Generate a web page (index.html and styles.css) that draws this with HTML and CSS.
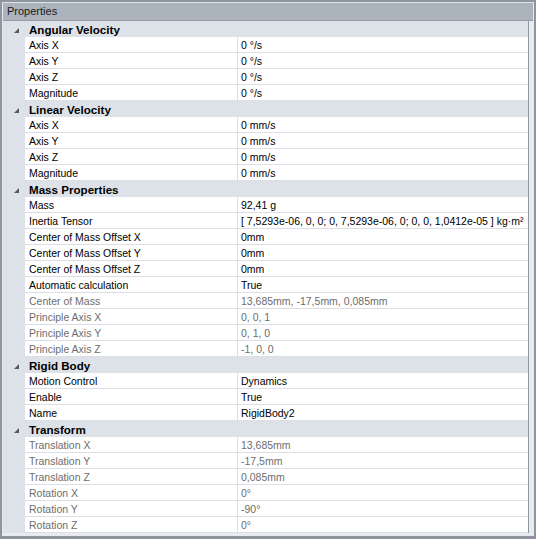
FILE: index.html
```html
<!DOCTYPE html>
<html>
<head>
<meta charset="utf-8">
<link rel="stylesheet" href="styles.css">
</head>
<body>
<div class="frame">
  <div class="panel">
    <div class="title">Properties</div>
    <div class="grid">
      <div class="cat"><span class="arrow"></span><span class="cat-name">Angular Velocity</span></div>
      <div class="row"><div class="gut"></div><div class="label">Axis X</div><div class="value">0 °/s</div></div>
      <div class="row"><div class="gut"></div><div class="label">Axis Y</div><div class="value">0 °/s</div></div>
      <div class="row"><div class="gut"></div><div class="label">Axis Z</div><div class="value">0 °/s</div></div>
      <div class="row"><div class="gut"></div><div class="label">Magnitude</div><div class="value">0 °/s</div></div>

      <div class="cat"><span class="arrow"></span><span class="cat-name">Linear Velocity</span></div>
      <div class="row"><div class="gut"></div><div class="label">Axis X</div><div class="value">0 mm/s</div></div>
      <div class="row"><div class="gut"></div><div class="label">Axis Y</div><div class="value">0 mm/s</div></div>
      <div class="row"><div class="gut"></div><div class="label">Axis Z</div><div class="value">0 mm/s</div></div>
      <div class="row"><div class="gut"></div><div class="label">Magnitude</div><div class="value">0 mm/s</div></div>

      <div class="cat"><span class="arrow"></span><span class="cat-name">Mass Properties</span></div>
      <div class="row"><div class="gut"></div><div class="label">Mass</div><div class="value">92,41 g</div></div>
      <div class="row"><div class="gut"></div><div class="label">Inertia Tensor</div><div class="value">[ 7,5293e-06, 0, 0; 0, 7,5293e-06, 0; 0, 0, 1,0412e-05 ] kg·m²</div></div>
      <div class="row"><div class="gut"></div><div class="label">Center of Mass Offset X</div><div class="value">0mm</div></div>
      <div class="row"><div class="gut"></div><div class="label">Center of Mass Offset Y</div><div class="value">0mm</div></div>
      <div class="row"><div class="gut"></div><div class="label">Center of Mass Offset Z</div><div class="value">0mm</div></div>
      <div class="row"><div class="gut"></div><div class="label">Automatic calculation</div><div class="value">True</div></div>
      <div class="row ro"><div class="gut"></div><div class="label">Center of Mass</div><div class="value">13,685mm, -17,5mm, 0,085mm</div></div>
      <div class="row ro"><div class="gut"></div><div class="label">Principle Axis X</div><div class="value">0, 0, 1</div></div>
      <div class="row ro"><div class="gut"></div><div class="label">Principle Axis Y</div><div class="value">0, 1, 0</div></div>
      <div class="row ro"><div class="gut"></div><div class="label">Principle Axis Z</div><div class="value">-1, 0, 0</div></div>

      <div class="cat"><span class="arrow"></span><span class="cat-name">Rigid Body</span></div>
      <div class="row"><div class="gut"></div><div class="label">Motion Control</div><div class="value">Dynamics</div></div>
      <div class="row"><div class="gut"></div><div class="label">Enable</div><div class="value">True</div></div>
      <div class="row"><div class="gut"></div><div class="label">Name</div><div class="value">RigidBody2</div></div>

      <div class="cat"><span class="arrow"></span><span class="cat-name">Transform</span></div>
      <div class="row ro"><div class="gut"></div><div class="label">Translation X</div><div class="value">13,685mm</div></div>
      <div class="row ro"><div class="gut"></div><div class="label">Translation Y</div><div class="value">-17,5mm</div></div>
      <div class="row ro"><div class="gut"></div><div class="label">Translation Z</div><div class="value">0,085mm</div></div>
      <div class="row ro"><div class="gut"></div><div class="label">Rotation X</div><div class="value">0°</div></div>
      <div class="row ro"><div class="gut"></div><div class="label">Rotation Y</div><div class="value">-90°</div></div>
      <div class="row ro"><div class="gut"></div><div class="label">Rotation Z</div><div class="value">0°</div></div>
    </div>
  </div>
</div>
</body>
</html>
```
FILE: styles.css
```css
html, body {
  margin: 0;
  padding: 0;
}
body {
  width: 536px;
  height: 539px;
  overflow: hidden;
  background: #8f959e;
  font-family: "Liberation Sans", Arial, sans-serif;
  font-size: 10.5px;
  color: #000;
}
.frame {
  padding: 2px 2px 0 2px;
  height: 537px;
}
.panel {
  width: 530px;
  height: 532px;
  border: 1px solid #e6e9ed;
  border-top-color: #dfe2e6;
  background: #e9ecef;
}
.title {
  height: 18px;
  line-height: 17px;
  box-sizing: border-box;
  padding-left: 4px;
  background: #abb3bd;
  border-bottom: 1px solid #959ca5;
  color: #1b1b1b;
  font-size: 11px;
}
.grid {
  width: 525px;
  border-right: 1px solid #8f959e;
  background: #dde1e8;
}
.cat {
  height: 16px;
  display: flex;
  align-items: center;
  background: #dde1e8;
}
.arrow {
  width: 22px;
  height: 16px;
  position: relative;
  flex: none;
}
.arrow::after {
  content: "";
  position: absolute;
  left: 11px;
  top: 7px;
  width: 0;
  height: 0;
  border-style: solid;
  border-width: 0 0 5px 5px;
  border-color: transparent transparent #5a5a5a transparent;
}
.cat-name {
  padding-left: 4px;
  padding-top: 2px;
  font-weight: bold;
  font-size: 11.6px;
  line-height: 14px;
  color: #000;
}
.row {
  height: 16px;
  display: flex;
}
.gut {
  width: 22px;
  flex: none;
  background: #dde1e8;
}
.label,
.value {
  box-sizing: border-box;
  height: 16px;
  padding-top: 1px;
  background: #fff;
  border-bottom: 1px solid #dcdee4;
  line-height: 15px;
  white-space: nowrap;
  overflow: hidden;
}
.label {
  width: 213px;
  flex: none;
  padding-left: 4px;
  border-right: 1px solid #dcdee4;
}
.value {
  flex: 1;
  padding-left: 3px;
}
.ro .label,
.ro .value {
  color: #6d6d6d;
}
```
